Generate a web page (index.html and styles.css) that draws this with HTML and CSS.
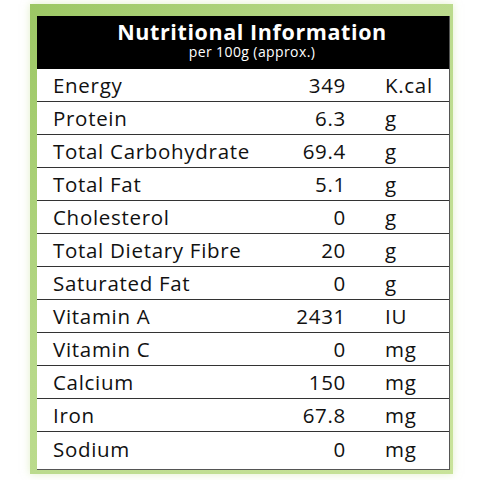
FILE: index.html
```html
<!DOCTYPE html>
<html lang="en">
<head>
  <meta charset="UTF-8" />
  <meta name="viewport" content="width=device-width, initial-scale=1.0"/>
  <title>Nutritional Information</title>
  <link rel="stylesheet" href="styles.css">
</head>
<body>
  <div class="frame">
    <div class="panel">
      <!-- Header -->
      <div class="header">
        <h1>Nutritional Information</h1>
        <p>per 100g (approx.)</p>
      </div>

      <!-- Nutrient rows -->
      <div class="row"><span class="name">Energy</span><span class="value">349</span><span class="unit">K.cal</span></div>
      <div class="row"><span class="name">Protein</span><span class="value">6.3</span><span class="unit">g</span></div>
      <div class="row"><span class="name">Total Carbohydrate</span><span class="value">69.4</span><span class="unit">g</span></div>
      <div class="row"><span class="name">Total Fat</span><span class="value">5.1</span><span class="unit">g</span></div>
      <div class="row"><span class="name">Cholesterol</span><span class="value">0</span><span class="unit">g</span></div>
      <div class="row"><span class="name">Total Dietary Fibre</span><span class="value">20</span><span class="unit">g</span></div>
      <div class="row"><span class="name">Saturated Fat</span><span class="value">0</span><span class="unit">g</span></div>
      <div class="row"><span class="name">Vitamin A</span><span class="value">2431</span><span class="unit">IU</span></div>
      <div class="row"><span class="name">Vitamin C</span><span class="value">0</span><span class="unit">mg</span></div>
      <div class="row"><span class="name">Calcium</span><span class="value">150</span><span class="unit">mg</span></div>
      <div class="row"><span class="name">Iron</span><span class="value">67.8</span><span class="unit">mg</span></div>
      <div class="row last"><span class="name">Sodium</span><span class="value">0</span><span class="unit">mg</span></div>
    </div>
  </div>
</body>
</html>
```

FILE: styles.css
```css
* { box-sizing: border-box; margin: 0; padding: 0; font-family: 'Open Sans', 'DejaVu Sans', sans-serif; }

body {
  background: #fff;
  width: 480px;
  height: 480px;
  padding: 4px 0 0 30px;
}

.frame {
  width: 423px;
  height: 470px;
  padding: 12px 3px 4px 7px;
  background: linear-gradient(to bottom right, #9cc764, #b8d98a 40%, #c9e39a);
  box-shadow: 0 0 8px rgba(200, 225, 150, 0.5);
}

.panel {
  background: #fff;
  height: 100%;
  border-right: 1px solid #555;
  border-bottom: 1px solid #555;
  display: flex;
  flex-direction: column;
}

.header {
  background: #000;
  color: #fff;
  height: 53px;
  text-align: center;
  padding: 4px 0 0 18px;
}

.header h1 {
  font-size: 21.5px;
  font-weight: 700;
  letter-spacing: 0.6px;
  line-height: 24px;
}

.header p {
  font-size: 14px;
  letter-spacing: 0.4px;
  line-height: 16px;
}

.row {
  display: grid;
  grid-template-columns: 1fr 90px 104px;
  align-items: center;
  height: 33px;
  border-bottom: 1.5px solid #333;
  color: #111;
  font-size: 20.5px;
  letter-spacing: 0.7px;
  white-space: nowrap;
}

.row.last {
  flex: 1;
  border-bottom: none;
  padding-bottom: 4px;
}

.name { padding-left: 16px; }

.value { text-align: right; margin-right: -1px; }

.unit { padding-left: 40px; }
```
